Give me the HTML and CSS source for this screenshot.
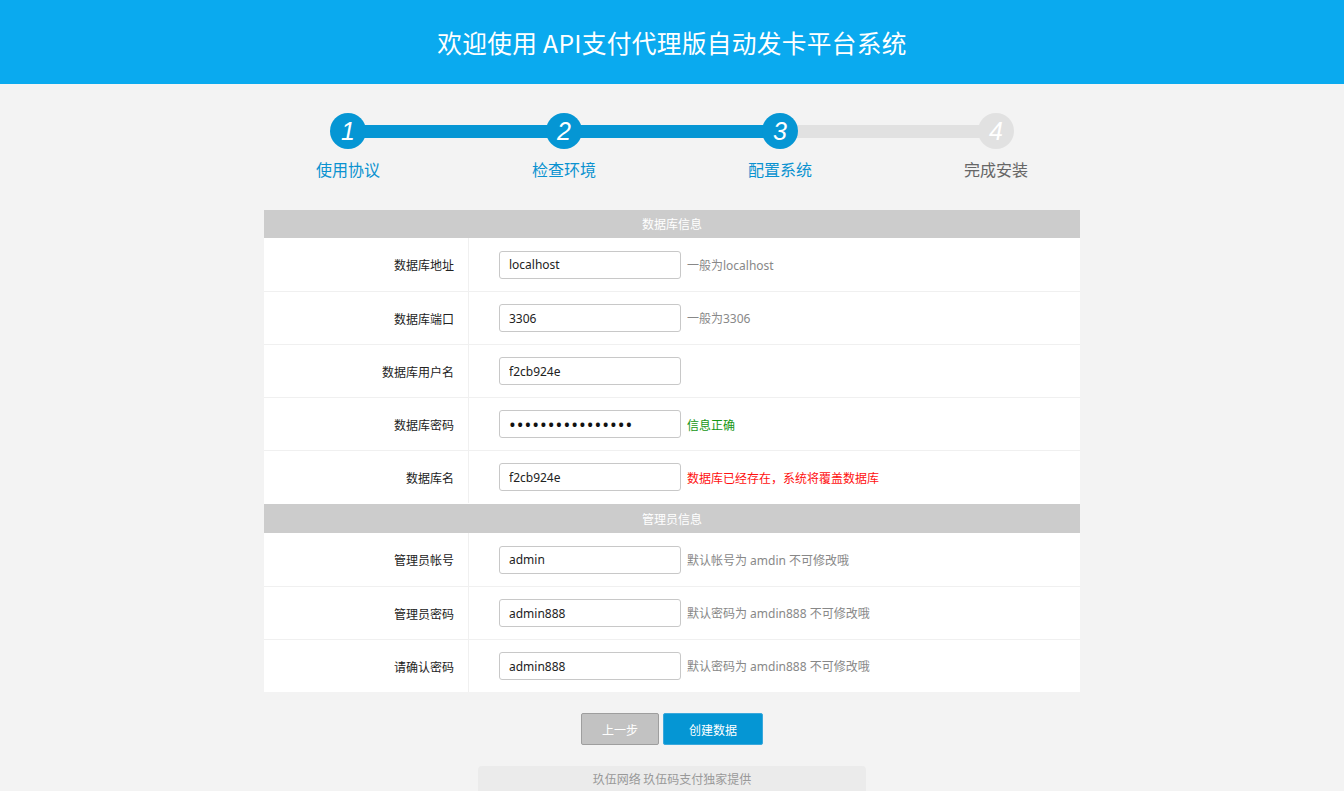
FILE: index.html
```html
<!DOCTYPE html>
<html lang="zh-CN">
<head>
<meta charset="utf-8">
<title>安装</title>
<link rel="stylesheet" href="styles.css">
</head>
<body>
<header class="top">
  <h1 class="title">欢迎使用 API支付代理版自动发卡平台系统</h1>
</header>

<ol class="steps">
  <li class="step done">
    <div class="bar bar-first"><span class="dot">1</span></div>
    <span class="label">使用协议</span>
  </li>
  <li class="step done">
    <div class="bar bar-full"><span class="dot">2</span></div>
    <span class="label">检查环境</span>
  </li>
  <li class="step done">
    <div class="bar bar-split"><span class="dot">3</span></div>
    <span class="label">配置系统</span>
  </li>
  <li class="step todo">
    <div class="bar bar-last"><span class="dot">4</span></div>
    <span class="label">完成安装</span>
  </li>
</ol>

<form class="form">
  <div class="section">数据库信息</div>
  <div class="row">
    <div class="key">数据库地址</div>
    <div class="val"><input class="field" type="text" value="localhost"><span class="hint">一般为localhost</span></div>
  </div>
  <div class="row">
    <div class="key">数据库端口</div>
    <div class="val"><input class="field" type="text" value="3306"><span class="hint">一般为3306</span></div>
  </div>
  <div class="row">
    <div class="key">数据库用户名</div>
    <div class="val"><input class="field" type="text" value="f2cb924e"></div>
  </div>
  <div class="row">
    <div class="key">数据库密码</div>
    <div class="val"><input class="field pass" type="password" value="abcdefghijklmnop"><span class="hint ok">信息正确</span></div>
  </div>
  <div class="row">
    <div class="key">数据库名</div>
    <div class="val"><input class="field" type="text" value="f2cb924e"><span class="hint err">数据库已经存在，系统将覆盖数据库</span></div>
  </div>
  <div class="section section-next">管理员信息</div>
  <div class="row">
    <div class="key">管理员帐号</div>
    <div class="val"><input class="field" type="text" value="admin"><span class="hint">默认帐号为 amdin 不可修改哦</span></div>
  </div>
  <div class="row">
    <div class="key">管理员密码</div>
    <div class="val"><input class="field" type="text" value="admin888"><span class="hint">默认密码为 amdin888 不可修改哦</span></div>
  </div>
  <div class="row">
    <div class="key">请确认密码</div>
    <div class="val"><input class="field" type="text" value="admin888"><span class="hint">默认密码为 amdin888 不可修改哦</span></div>
  </div>
</form>

<div class="actions">
  <button class="btn btn-back" type="button">上一步</button>
  <button class="btn btn-go" type="button">创建数据</button>
</div>

<footer class="foot">玖伍网络 玖伍码支付独家提供</footer>
</body>
</html>
```

FILE: styles.css
```css
* { box-sizing: border-box; }
html, body { margin: 0; padding: 0; }
body {
  background: #f3f3f3;
  font-family: "Noto Sans", "Noto Sans CJK SC", sans-serif;
  color: #333;
  font-size: 12px;
}
.top {
  height: 84px;
  background: #0aaaef;
  display: flex;
  align-items: center;
  justify-content: center;
}
.title {
  margin: 0;
  color: #fff;
  font-weight: normal;
  font-size: 24.7px;
  font-family: "Noto Sans CJK SC", sans-serif;
  letter-spacing: 0.3px;
}
.steps {
  list-style: none;
  margin: 29px auto 0;
  padding: 0;
  width: 864px;
  display: grid;
  grid-template-columns: repeat(4, 1fr);
}
.step {
  display: flex;
  flex-direction: column;
  align-items: center;
}
.bar {
  width: 100%;
  height: 36px;
  display: flex;
  justify-content: center;
  background-repeat: no-repeat;
  background-size: 50% 13px;
}
.bar-first {
  background-image: linear-gradient(#0596d4, #0596d4);
  background-position: right center;
}
.bar-full {
  background-image: linear-gradient(#0596d4, #0596d4);
  background-size: 100% 13px;
  background-position: center;
}
.bar-split {
  background-image: linear-gradient(#0596d4, #0596d4), linear-gradient(#e1e1e1, #e1e1e1);
  background-position: left center, right center;
}
.bar-last {
  background-image: linear-gradient(#e1e1e1, #e1e1e1);
  background-position: left center;
}
.dot {
  width: 36px;
  height: 36px;
  border-radius: 50%;
  background: #0596d4;
  color: #fff;
  font-family: "Liberation Sans", Arial, sans-serif;
  font-style: italic;
  font-size: 25px;
  line-height: 36px;
  text-align: center;
}
.todo .dot { background: #e1e1e1; }
.label {
  margin-top: 9px;
  font-size: 16px;
  color: #0a92d0;
  font-family: "Noto Sans CJK SC", sans-serif;
  line-height: 22px;
}
.todo .label { color: #666; }

.form {
  width: 816px;
  margin: 30px auto 0;
  background: #fff;
}
.section {
  height: 28px;
  line-height: 28px;
  background: #cccccc;
  color: #fff;
  text-align: center;
  font-size: 12px;
  font-family: "Noto Sans CJK SC", sans-serif;
}
.section-next {
  margin-top: 1px;
  height: 29px;
  line-height: 29px;
}
.row {
  display: flex;
  height: 53px;
  border-top: 1px solid #f0f0f0;
}
.section + .row { border-top: 0; }
.key {
  width: 205px;
  border-right: 1px solid #f0f0f0;
  display: flex;
  align-items: center;
  justify-content: flex-end;
  padding-right: 14px;
  font-size: 12px;
  color: #222;
  font-family: "Noto Sans CJK SC", sans-serif;
}
.val {
  display: flex;
  align-items: center;
  padding-left: 30px;
}
.field {
  width: 182px;
  height: 28px;
  border: 1px solid #c8c8c8;
  border-radius: 3px;
  padding: 0 9px;
  font-size: 12px;
  color: #222;
  font-family: "Noto Sans", "DejaVu Sans", sans-serif;
  background: #fff;
  outline: none;
}
.pass { font-size: 18px; letter-spacing: 1px; color: #111; }
.hint {
  margin-left: 6px;
  color: #888;
  font-size: 12px;
  font-family: "Noto Sans", "Noto Sans CJK SC", sans-serif;
}
.hint.ok { color: #159615; font-family: "Noto Sans CJK SC", sans-serif; }
.hint.err { color: #ff1010; font-family: "Noto Sans CJK SC", sans-serif; }

.actions {
  display: flex;
  justify-content: center;
  gap: 4px;
  margin-top: 21px;
}
.btn {
  height: 32px;
  border-radius: 2px;
  color: #fff;
  font-size: 12px;
  font-family: "Noto Sans CJK SC", sans-serif;
  cursor: pointer;
}
.btn-back {
  width: 78px;
  background: #c2c2c2;
  border: 1px solid #9e9e9e;
}
.btn-go {
  width: 100px;
  background: #0596d4;
  border: 1px solid #3aa8dc;
}
.foot {
  width: 388px;
  margin: 21px auto 0;
  height: 30px;
  background: #ebebeb;
  border-radius: 4px 4px 0 0;
  color: #999;
  text-align: center;
  line-height: 26px;
  font-size: 12px;
  font-family: "Noto Sans CJK SC", sans-serif;
}
```
